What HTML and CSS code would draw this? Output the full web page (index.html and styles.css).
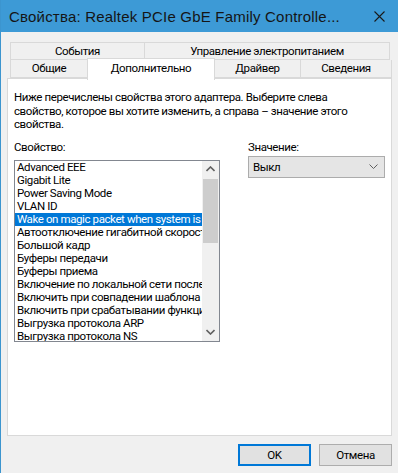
FILE: index.html
```html
<!DOCTYPE html>
<html lang="ru">
<head>
<meta charset="UTF-8" />
<title>Свойства: Realtek PCIe GbE Family Controller</title>
<link rel="stylesheet" href="styles.css">
</head>
<body>

<div class="window">
  <div class="titlebar">
    <span class="title">Свойства: Realtek PCIe GbE Family Controlle...</span>
    <svg class="close" width="11" height="11" viewBox="0 0 11 11"><path d="M0.5 0.5L10.5 10.5M10.5 0.5L0.5 10.5" stroke="#1a1a1a" stroke-width="1.1" fill="none"/></svg>
  </div>

  <div class="tabs">
    <div class="tab-row">
      <div class="tab tab-events">События</div>
      <div class="tab tab-power">Управление электропитанием</div>
    </div>
    <div class="tab-row">
      <div class="tab tab-general">Общие</div>
      <div class="tab tab-advanced active">Дополнительно</div>
      <div class="tab tab-driver">Драйвер</div>
      <div class="tab tab-details">Сведения</div>
    </div>
  </div>

  <div class="panel">
    <p class="intro">Ниже перечислены свойства этого адаптера. Выберите слева свойство, которое вы хотите изменить, а справа – значение этого свойства.</p>

    <div class="fields">
      <div class="field-left">
        <div class="label">Свойство:</div>
        <div class="listbox">
          <div class="items" id="items"></div>
          <div class="scrollbar">
            <div class="sb-btn"><svg width="9" height="6" viewBox="0 0 9 6"><path d="M0.5 5L4.5 1L8.5 5" stroke="#606060" stroke-width="1.6" fill="none"/></svg></div>
            <div class="sb-track"><div class="sb-thumb"></div></div>
            <div class="sb-btn"><svg width="9" height="6" viewBox="0 0 9 6"><path d="M0.5 1L4.5 5L8.5 1" stroke="#606060" stroke-width="1.6" fill="none"/></svg></div>
          </div>
        </div>
      </div>
      <div class="field-right">
        <div class="label">Значение:</div>
        <div class="combo">
          <span>Выкл</span>
          <svg width="9" height="5" viewBox="0 0 9 5"><path d="M0.5 0.5L4.5 4.5L8.5 0.5" stroke="#606060" stroke-width="1" fill="none"/></svg>
        </div>
      </div>
    </div>
  </div>

  <div class="footer">
    <button class="btn btn-ok">OK</button>
    <button class="btn">Отмена</button>
  </div>
</div>

<script>
  const props = [
    'Advanced EEE',
    'Gigabit Lite',
    'Power Saving Mode',
    'VLAN ID',
    'Wake on magic packet when system is in the S0ix power state',
    'Автоотключение гигабитной скорости',
    'Большой кадр',
    'Буферы передачи',
    'Буферы приема',
    'Включение по локальной сети после отключения',
    'Включить при совпадении шаблона',
    'Включить при срабатывании функции Magic Packet',
    'Выгрузка протокола ARP',
    'Выгрузка протокола NS'
  ];
  const list = document.getElementById('items');
  props.forEach((name, i) => {
    const row = document.createElement('div');
    row.className = 'item' + (i === 4 ? ' selected' : '');
    row.textContent = name;
    list.appendChild(row);
  });
</script>

</body>
</html>
```

FILE: styles.css
```css
body {
  margin: 0;
  font-family: Roboto, "Liberation Sans", Arial, sans-serif;
  font-size: 11.5px;
  letter-spacing: -0.4px;
  color: #000;
  background: #f0f0f0;
}
.window {
  width: 397px;
  height: 473px;
  border-left: 1px solid #3c95cf;
  background: #f0f0f0;
  display: flex;
  flex-direction: column;
}
.titlebar {
  height: 32px;
  flex: none;
  background: #3d9ad6;
  display: flex;
  align-items: center;
  justify-content: space-between;
  padding: 0 13px 0 8px;
}
.title {
  font-family: "Liberation Sans", Arial, sans-serif;
  font-size: 15px;
  color: #151515;
  letter-spacing: 0.2px;
}
.close {
  display: block;
}
.tabs {
  margin: 10px 0 0 9px;
}
.tab-row {
  display: flex;
}
.tab {
  box-sizing: border-box;
  border: 1px solid #d9d9d9;
  background: #f0f0f0;
  text-align: center;
  line-height: 16px;
  height: 18px;
  margin-left: -1px;
}
.tab-row + .tab-row .tab {
  border-top: none;
  line-height: 17px;
}
.tab-row .tab:first-child {
  margin-left: 0;
}
.tab-events { width: 135px; }
.tab-power { width: 246px; }
.tab-general { width: 78px; }
.tab-driver { width: 87px; }
.tab-details { width: 92px; }
.tab-row + .tab-row .tab.active {
  width: 128px;
  height: 22px;
  margin-top: -2px;
  margin-bottom: -2px;
  border: 1px solid #d9d9d9;
  border-bottom: none;
  background: #fff;
  line-height: 18px;
  position: relative;
  z-index: 1;
}
.panel {
  box-sizing: border-box;
  width: 385px;
  height: 358px;
  margin-left: 6px;
  border: 1px solid #d9d9d9;
  background: #fff;
  padding: 12px 6px 0 6px;
}
.intro {
  margin: 0;
  line-height: 13.5px;
  width: 345px;
}
.fields {
  display: flex;
  margin-top: 9px;
}
.label {
  line-height: 13px;
}
.field-left {
  width: 206px;
}
.field-right {
  width: 138px;
  margin-left: 28px;
}
.listbox {
  box-sizing: border-box;
  margin-top: 6px;
  height: 182px;
  border: 1px solid #828790;
  display: flex;
}
.items {
  flex: 1;
  overflow: hidden;
}
.item {
  white-space: nowrap;
  overflow: hidden;
  line-height: 13px;
  padding-left: 2px;
}
.item.selected {
  background: #0078d7;
  color: #fff;
}
.scrollbar {
  width: 17px;
  flex: none;
  background: #f0f0f0;
  display: flex;
  flex-direction: column;
}
.sb-btn {
  height: 17px;
  display: flex;
  align-items: center;
  justify-content: center;
}
.sb-track {
  flex: 1;
}
.sb-thumb {
  margin: 1px 1px 0 1px;
  height: 64px;
  background: #cdcdcd;
}
.combo {
  box-sizing: border-box;
  margin-top: 2px;
  height: 22px;
  border: 1px solid #acacac;
  background: #e5e5e5;
  display: flex;
  align-items: center;
  justify-content: space-between;
  padding: 0 6px 0 4px;
}
.combo svg {
  display: block;
}
.footer {
  display: flex;
  justify-content: flex-end;
  gap: 8px;
  margin: 8px 6px 0 0;
}
.btn {
  box-sizing: border-box;
  width: 73px;
  height: 22px;
  border: 1px solid #adadad;
  background: #e1e1e1;
  font-family: inherit;
  font-size: 11.5px;
  letter-spacing: inherit;
  color: #000;
  padding: 0;
}
.btn-ok {
  border: 2px solid #0078d7;
}
```
